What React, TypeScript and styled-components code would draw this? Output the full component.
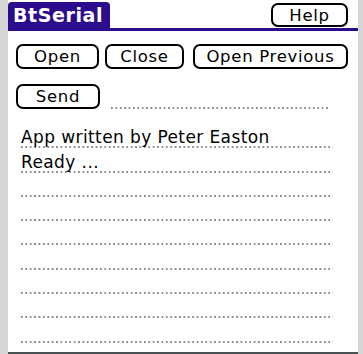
import React from 'react';
import styled, { createGlobalStyle } from 'styled-components';

const GlobalStyle = createGlobalStyle`
  html, body {
    margin: 0;
    padding: 0;
    background: #d6d6d6;
  }
  body {
    font-family: "DejaVu Sans", "Liberation Sans", sans-serif;
  }
`;

const LOG_LINES = ['App written by Peter Easton', 'Ready ...', '', '', '', '', '', '', ''];

const App = () => (
  <>
    <GlobalStyle />
    <Device>
      <Screen>
        <TitleBar>
          <TitleTab>BtSerial</TitleTab>
          <PalmButton $w={77} $h={24}>Help</PalmButton>
        </TitleBar>

        <ButtonRow>
          <PalmButton $w={83}>Open</PalmButton>
          <PalmButton $w={79}>Close</PalmButton>
          <PalmButton $w={155} $ml={3}>Open Previous</PalmButton>
        </ButtonRow>

        <SendRow>
          <PalmButton $w={84}>Send</PalmButton>
          <InputLine />
        </SendRow>

        <Log>
          {LOG_LINES.map((line, i) => (
            <LogLine key={i}>{line}</LogLine>
          ))}
        </Log>
      </Screen>
    </Device>
  </>
);

export default App;

const Device = styled.div`
  width: 363px;
  height: 354px;
  display: flex;
  padding-left: 8px;
  box-sizing: border-box;
  overflow: hidden;
`;

const Screen = styled.div`
  width: 350px;
  height: 354px;
  background: #fff;
  border-bottom: 2px solid #4a5252;
  box-sizing: border-box;
  display: flex;
  flex-direction: column;
  padding-top: 2px;
`;

const TitleBar = styled.div`
  display: flex;
  justify-content: space-between;
  align-items: flex-start;
  height: 26px;
  border-bottom: 3px solid #2a0c8c;
  padding-right: 10px;
`;

const TitleTab = styled.div`
  width: 102px;
  height: 26px;
  box-sizing: border-box;
  background: #2a0c8c;
  border-radius: 4px 4px 0 0;
  color: #fff;
  font-family: "DejaVu Sans", "Liberation Sans", sans-serif;
  font-weight: bold;
  font-size: 19px;
  letter-spacing: 0.6px;
  line-height: 27px;
  padding-left: 5px;
  white-space: nowrap;
`;

const PalmButton = styled.div<{ $w: number; $h?: number; $ml?: number }>`
  width: ${({ $w }) => $w}px;
  height: ${({ $h }) => $h ?? 25}px;
  margin-left: ${({ $ml }) => $ml ?? 0}px;
  margin-top: 1px;
  box-sizing: border-box;
  border: 2px solid #000;
  border-radius: 7px;
  display: flex;
  align-items: center;
  justify-content: center;
  font-size: 16.5px;
  letter-spacing: 0.7px;
  color: #000;
  white-space: nowrap;
  flex-shrink: 0;
`;

const ButtonRow = styled.div`
  display: flex;
  gap: 6px;
  margin-top: 12px;
  padding-left: 8px;
`;

const SendRow = styled.div`
  display: flex;
  align-items: flex-end;
  margin-top: 14px;
  padding-left: 8px;
  gap: 11px;
`;

const dotted = `
  background-image: linear-gradient(to right, #8c8c8c 50%, transparent 50%);
  background-size: 4.4px 2px;
  background-repeat: repeat-x;
  background-position: left bottom;
`;

const InputLine = styled.div`
  width: 218px;
  height: 2px;
  ${dotted}
`;

const Log = styled.div`
  display: flex;
  flex-direction: column;
  margin-top: 15px;
  padding-left: 13px;
  width: 312px;
`;

const LogLine = styled.div`
  height: 24.3px;
  box-sizing: border-box;
  display: flex;
  align-items: flex-end;
  padding-bottom: 1px;
  font-size: 17px;
  letter-spacing: 0.4px;
  line-height: 20px;
  color: #000;
  white-space: nowrap;
  ${dotted}
`;
